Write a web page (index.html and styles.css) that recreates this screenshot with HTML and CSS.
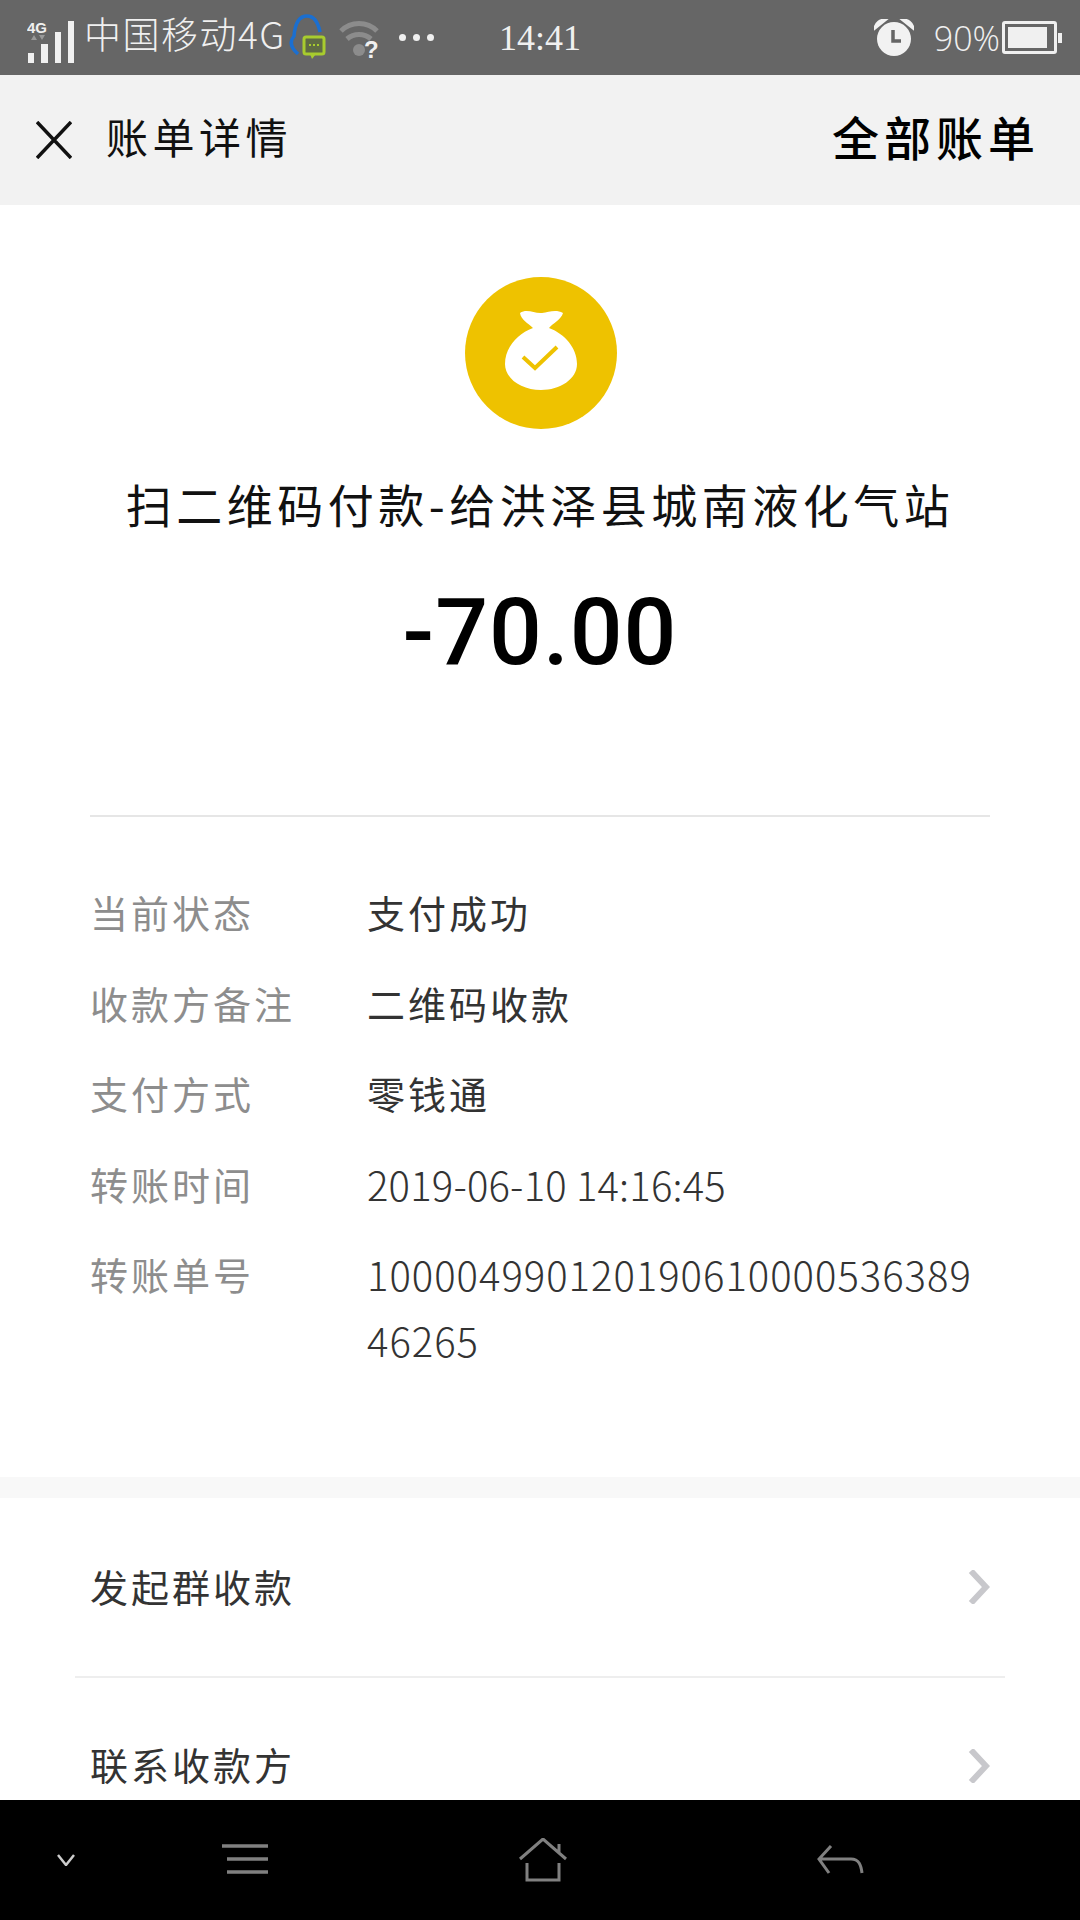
FILE: index.html
```html
<!DOCTYPE html>
<html lang="zh-CN">
<head>
  <meta charset="UTF-8" />
  <title>账单详情</title>
  <link rel="stylesheet" href="styles.css">
</head>
<body>
  <div class="screen">
    <div class="statusbar">
      <div class="status-left">
        <svg class="ic-signal" width="48" height="46" viewBox="0 0 48 46">
          <text x="0" y="15" class="net-label">4G</text>
          <path d="M4 22h6l-3-5zM12 17h6l-3 5z" fill="#999"/>
          <path d="M1 35h6v10H1zM14 26h7v19h-7zM28 14h6v31h-6zM41 3h6v42h-6z" fill="#f0f0f0"/>
        </svg>
        <span class="carrier">中国移动4G</span>
        <svg class="ic-qq" width="38" height="48" viewBox="0 0 38 48">
          <path d="M9 40C2 34 0 28 5 22 6 10 10 2 18 2c7 0 11 6 13 16" fill="none" stroke="#1b6fd0" stroke-width="3.5"/>
          <rect x="15" y="23" width="20" height="17" rx="2" fill="#5f6b44" stroke="#a8cc2e" stroke-width="3"/>
          <path d="M21 40h6l-4 5z" fill="#a8cc2e"/>
          <path d="M20 31h2M24 31h2M28 31h2" stroke="#a8cc2e" stroke-width="2"/>
        </svg>
        <svg class="ic-wifi" width="42" height="44" viewBox="0 0 42 44">
          <path d="M2 11c10-10 26-10 36 0M8 19c7-6 17-6 24 0" fill="none" stroke="#8c8c8c" stroke-width="5"/>
          <circle cx="20" cy="30" r="6" fill="#8c8c8c"/>
          <text x="25" y="38" class="wifi-mark">?</text>
        </svg>
        <div class="dots"><i></i><i></i><i></i></div>
      </div>
      <div class="clock">14:41</div>
      <div class="status-right">
        <svg class="ic-alarm" width="40" height="38" viewBox="0 0 40 38">
          <circle cx="20" cy="20" r="17" fill="#f2f2f2"/>
          <path d="M1 9c1-5 5-8 10-8L1 9zM39 9c-1-5-5-8-10-8l10 8z" fill="#f2f2f2" stroke="#f2f2f2" stroke-width="3"/>
          <path d="M19 11v11h8" fill="none" stroke="#666" stroke-width="3.5"/>
        </svg>
        <span class="battery-text">90%</span>
        <div class="battery"><div class="battery-fill"></div></div>
        <div class="battery-tip"></div>
      </div>
    </div>

    <div class="topbar">
      <div class="topbar-left">
        <svg class="ic-close" width="36" height="38" viewBox="0 0 36 38">
          <path d="M1 1l34 36M35 1L1 37" fill="none" stroke="#111" stroke-width="3.5"/>
        </svg>
        <span class="topbar-title">账单详情</span>
      </div>
      <span class="topbar-link">全部账单</span>
    </div>

    <div class="content">
      <section class="summary">
        <svg class="ic-bag" width="152" height="152" viewBox="0 0 152 152">
          <circle cx="76" cy="76" r="76" fill="#eec200"/>
          <path d="M55 36c7-5 15 1 22 0s14-4 21 0c-2 7-10 10-14 15 16 6 28 20 28 36 0 15-17 26-36 26s-36-11-36-26c0-16 12-30 28-36-5-5-12-8-13-15z" fill="#fff"/>
          <path d="M58 80l12 11 22-21" fill="none" stroke="#eec200" stroke-width="4"/>
        </svg>
        <h1 class="payee">扫二维码付款-给洪泽县城南液化气站</h1>
        <div class="amount">-70.00</div>
      </section>

      <section class="details">
        <div class="detail-row"><span class="detail-label">当前状态</span><span class="detail-value">支付成功</span></div>
        <div class="detail-row"><span class="detail-label">收款方备注</span><span class="detail-value">二维码收款</span></div>
        <div class="detail-row"><span class="detail-label">支付方式</span><span class="detail-value">零钱通</span></div>
        <div class="detail-row"><span class="detail-label">转账时间</span><span class="detail-value detail-num">2019-06-10 14:16:45</span></div>
        <div class="detail-row"><span class="detail-label">转账单号</span><span class="detail-value detail-num detail-long">10000499012019061000053638946265</span></div>
      </section>

      <div class="section-gap"></div>

      <section class="actions">
        <div class="action-row">
          <span class="action-label">发起群收款</span>
          <svg class="ic-chevron" width="22" height="34" viewBox="0 0 22 34"><path d="M3 1l15 16L3 33" fill="none" stroke="#c8c8cc" stroke-width="6"/></svg>
        </div>
        <div class="action-row">
          <span class="action-label">联系收款方</span>
          <svg class="ic-chevron" width="22" height="34" viewBox="0 0 22 34"><path d="M3 1l15 16L3 33" fill="none" stroke="#c8c8cc" stroke-width="6"/></svg>
        </div>
      </section>
    </div>

    <div class="navbar">
      <svg class="nav-hide" width="20" height="12" viewBox="0 0 20 12"><path d="M2 1l8 10 8-10" fill="none" stroke="#ccc" stroke-width="2.5"/></svg>
      <svg class="nav-menu" width="48" height="32" viewBox="0 0 48 32"><path d="M1 2h46M6 15h41M6 28h41" fill="none" stroke="#808080" stroke-width="3.5"/></svg>
      <svg class="nav-home" width="48" height="44" viewBox="0 0 48 44"><path d="M1 21L24 1l23 20M40 6v9M8 25v17h32V25" fill="none" stroke="#808080" stroke-width="3"/></svg>
      <svg class="nav-back" width="48" height="30" viewBox="0 0 48 30"><path d="M14 1L2 14l10 14M2 14h32c8 0 10 6 11 14" fill="none" stroke="#808080" stroke-width="3"/></svg>
    </div>
  </div>
</body>
</html>
```
FILE: styles.css
```css
* {
  box-sizing: border-box;
}

body {
  margin: 0;
  font-family: "Noto Sans CJK SC", "Noto Sans", sans-serif;
  color: #222;
}

.screen {
  width: 1080px;
  height: 1920px;
  display: flex;
  flex-direction: column;
  overflow: hidden;
  background: #fff;
}

/* status bar */
.statusbar {
  height: 75px;
  flex: none;
  background: #666;
  color: #f0f0f0;
  display: flex;
  align-items: center;
  padding: 0 18px 0 27px;
}

.status-left {
  display: flex;
  align-items: center;
  width: 472px;
}

.net-label {
  font-family: "Liberation Sans", sans-serif;
  font-size: 15px;
  font-weight: bold;
  fill: #f0f0f0;
}

.wifi-mark {
  font-family: "Liberation Sans", sans-serif;
  font-size: 24px;
  font-weight: bold;
  fill: #f0f0f0;
}

.ic-signal {
  margin-top: 6px;
  flex: none;
}

.carrier {
  font-size: 37px;
  line-height: 50px;
  font-weight: 300;
  letter-spacing: 1.5px;
  margin-left: 9px;
  padding-bottom: 10px;
  white-space: nowrap;
}

.ic-qq {
  margin: 0 0 0 3px;
  flex: none;
}

.ic-wifi {
  margin: 8px 0 0 12px;
  flex: none;
}

.dots {
  display: flex;
  gap: 7px;
  margin-left: 18px;
  flex: none;
}

.dots i {
  width: 7px;
  height: 7px;
  border-radius: 50%;
  background: #f0f0f0;
}

.clock {
  font-family: "Liberation Serif", serif;
  font-size: 36px;
}

.status-right {
  margin-left: auto;
  display: flex;
  align-items: center;
}

.battery-text {
  font-family: "Open Sans", sans-serif;
  font-size: 34px;
  font-weight: 300;
  margin-left: 20px;
}

.battery {
  width: 55px;
  height: 33px;
  margin-left: 2px;
  padding: 3px;
  border: 3px solid #f0f0f0;
  border-radius: 3px;
}

.battery-fill {
  height: 100%;
  width: 90%;
  background: #f0f0f0;
}

.battery-tip {
  width: 4px;
  height: 10px;
  margin-left: 1px;
  background: #f0f0f0;
}

/* header */
.topbar {
  height: 130px;
  flex: none;
  background: #f2f2f2;
  display: flex;
  align-items: center;
  justify-content: space-between;
  padding: 0 40px 0 36px;
}

.topbar-left {
  display: flex;
  align-items: center;
}

.topbar-title {
  font-size: 42px;
  letter-spacing: 4.5px;
  margin-left: 34px;
  padding-bottom: 9px;
  color: #111;
}

.topbar-link {
  font-size: 47px;
  letter-spacing: 5px;
  font-weight: 500;
  padding-bottom: 9px;
  color: #000;
}

/* main */
.content {
  flex: 1;
  min-height: 0;
  overflow: hidden;
}

.summary {
  margin: 0 90px;
  padding-top: 72px;
  height: 612px;
  border-bottom: 2px solid #e6e6e6;
  display: flex;
  flex-direction: column;
  align-items: center;
}

.ic-bag {
  margin-left: 2px;
  flex: none;
}

.payee {
  margin: 44px -40px 0;
  font-size: 46px;
  line-height: 60px;
  letter-spacing: 4.5px;
  font-weight: 400;
  color: #111;
  white-space: nowrap;
}

.amount {
  margin-top: 45px;
  font-family: Roboto, sans-serif;
  font-size: 93px;
  line-height: 110px;
  letter-spacing: 1px;
  font-weight: 500;
  color: #000;
}

.details {
  padding: 50px 90px 0;
  height: 660px;
}

.detail-row {
  display: flex;
  font-size: 38px;
  letter-spacing: 3px;
  line-height: 90.5px;
}

.detail-label {
  width: 277px;
  flex: none;
  color: #8d8d8d;
}

.detail-value {
  width: 613px;
  color: #333;
  line-height: 66px;
  padding-top: 12px;
  word-break: break-all;
}

.detail-num {
  font-size: 40px;
  font-weight: 300;
  letter-spacing: 0.2px;
}

.detail-long {
  letter-spacing: 1px;
}

.section-gap {
  height: 21px;
  background: #f8f8f8;
}

.actions {
  padding: 0 75px;
}

.action-row {
  height: 180px;
  padding: 0 15px;
  display: flex;
  align-items: center;
  justify-content: space-between;
  font-size: 38px;
  letter-spacing: 3px;
  color: #333;
  border-bottom: 2px solid #eee;
}

.action-row:last-child {
  height: 175px;
  border-bottom: 0;
}

.action-label {
  padding-bottom: 4px;
}

.ic-chevron {
  flex: none;
}

/* bottom nav */
.navbar {
  height: 120px;
  flex: none;
  background: #000;
  display: flex;
  align-items: center;
  padding: 0 0 0 56px;
}

.nav-menu {
  margin-left: 145px;
}

.nav-home {
  margin-left: 250px;
}

.nav-back {
  margin-left: 250px;
}
```
